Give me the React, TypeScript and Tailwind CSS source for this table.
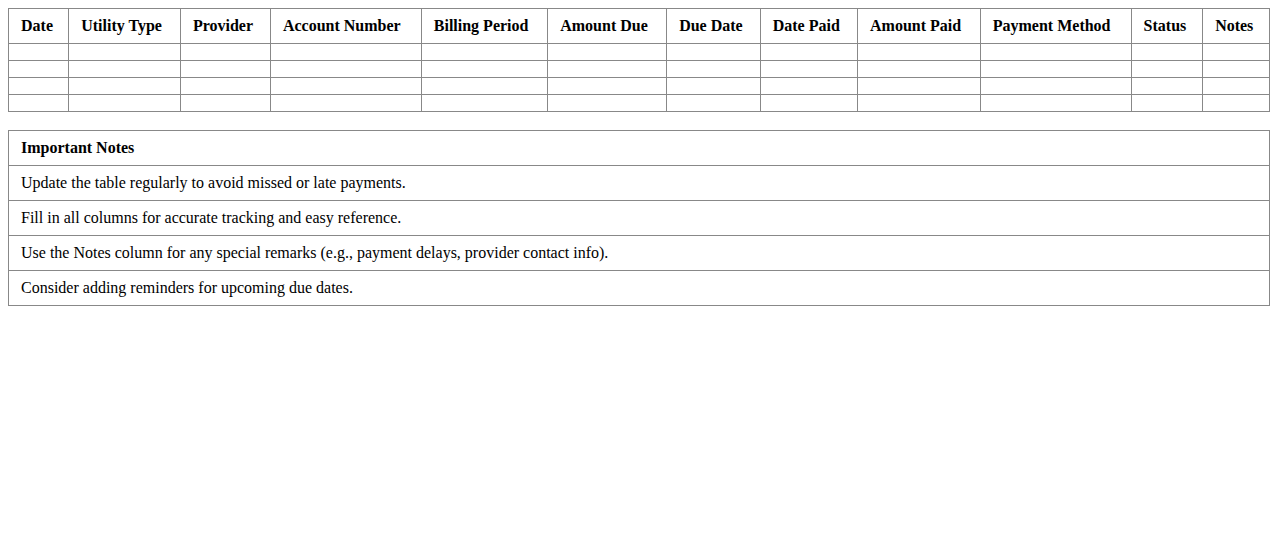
const columns = [
  "Date",
  "Utility Type",
  "Provider",
  "Account Number",
  "Billing Period",
  "Amount Due",
  "Due Date",
  "Date Paid",
  "Amount Paid",
  "Payment Method",
  "Status",
  "Notes",
];

const notes = [
  "Update the table regularly to avoid missed or late payments.",
  "Fill in all columns for accurate tracking and easy reference.",
  "Use the Notes column for any special remarks (e.g., payment delays, provider contact info).",
  "Consider adding reminders for upcoming due dates.",
];

export default function App() {
  return (
    <div className="min-h-screen bg-white p-2 font-['Liberation_Serif','Times_New_Roman',serif] text-base text-black">
      {/* Tracker table */}
      <table className="w-full border-collapse">
        <thead>
          <tr>
            {columns.map((col) => (
              <th
                key={col}
                className="border border-[#888] px-3 py-2 text-left font-bold leading-[18px]"
              >
                {col}
              </th>
            ))}
          </tr>
        </thead>
        <tbody>
          {[0, 1, 2, 3].map((r) => (
            <tr key={r}>
              {columns.map((col) => (
                <td key={col} className="h-[17px] border border-[#888] px-3 py-2" />
              ))}
            </tr>
          ))}
        </tbody>
      </table>

      {/* Notes table */}
      <table className="mt-[18px] w-full border-collapse">
        <thead>
          <tr>
            <th className="border border-[#888] px-3 py-2 text-left font-bold leading-[18px]">
              Important Notes
            </th>
          </tr>
        </thead>
        <tbody>
          {notes.map((n) => (
            <tr key={n}>
              <td className="border border-[#888] px-3 py-2 leading-[18px]">{n}</td>
            </tr>
          ))}
        </tbody>
      </table>
    </div>
  );
}
